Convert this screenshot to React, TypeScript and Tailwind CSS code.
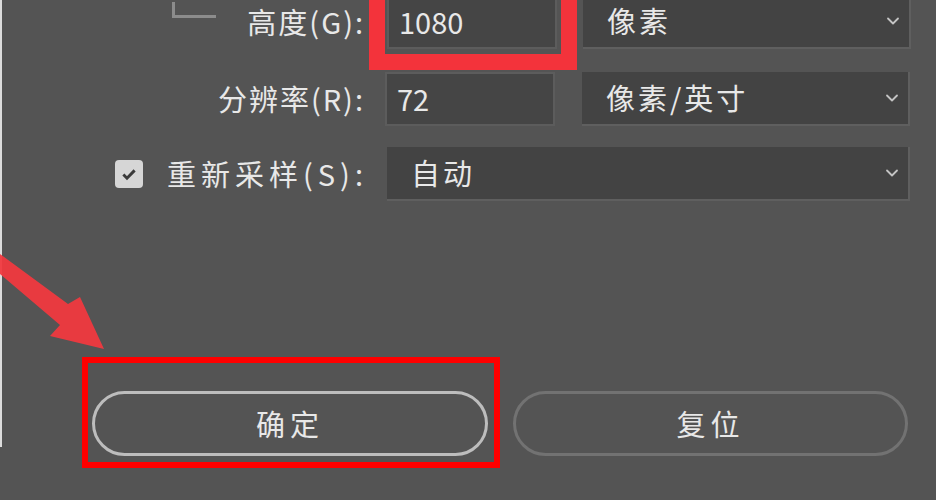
import { ChevronDown } from "lucide-react";

const font = { fontFamily: '"Microsoft YaHei", "Noto Sans CJK SC", sans-serif' };

function Select({ text, width, pad }: { text: string; width: string; pad: string }) {
  return (
    <div
      className={`flex h-full items-center justify-between border-b-2 border-r-2 border-[#5f5f5f] bg-[#434343] ${width} ${pad} pr-[6px]`}
    >
      <span className="tracking-[3px]">{text}</span>
      <ChevronDown className="h-[20px] w-[20px] text-[#c4c4c4]" strokeWidth={2.2} />
    </div>
  );
}

function NumberBox({ value }: { value: string }) {
  return (
    <div className="flex h-full w-[170px] items-center border-2 border-[#5c5c5c] bg-[#454545] pl-[10px]">
      {value}
    </div>
  );
}

export default function App() {
  return (
    <div
      className="relative h-[500px] w-[936px] overflow-hidden bg-[#545454] text-[29px] text-[#e8e8e8]"
      style={font}
    >
      {/* left window edge */}
      <div className="absolute left-0 top-0 h-[447px] w-[2px] bg-[#dcdcdc]" />

      {/* height row, scrolled partly off the top */}
      <div className="-mt-[5px] flex h-[54px] items-center">
        <div className="relative w-[370px] pr-[5px] text-right">
          {/* constrain-proportions bracket */}
          <div className="absolute left-[172px] top-[2px] h-[16px] w-[44px] border-b-[3px] border-l-[3px] border-[#8c8c8c]" />
          <span className="tracking-[2px]">高度(G):</span>
        </div>
        <div className="relative ml-[17px] h-full">
          <NumberBox value="1080" />
          {/* red highlight box */}
          <div className="pointer-events-none absolute -left-[18px] -right-[20px] -top-[10px] -bottom-[21px] border-[16px] border-t-0 border-[#f3333b]" />
        </div>
        <div className="ml-[26px] h-full">
          <Select text="像素" width="w-[328px]" pad="pl-[24px]" />
        </div>
      </div>

      {/* resolution row */}
      <div className="mt-[23px] flex h-[54px] items-center">
        <div className="w-[370px] pr-[5px] text-right tracking-[2px]">分辨率(R):</div>
        <div className="ml-[15px] h-full">
          <NumberBox value="72" />
        </div>
        <div className="ml-[27px] h-full">
          <Select text="像素/英寸" width="w-[328px]" pad="pl-[24px]" />
        </div>
      </div>

      {/* resample row */}
      <div className="mt-[21px] flex h-[54px] items-center">
        <div className="ml-[115px] flex h-[28px] w-[28px] items-center justify-center rounded-[4px] bg-[#d6d6d6]">
          <svg viewBox="0 0 16 16" className="h-[18px] w-[18px]">
            <path d="M3 8.5l3.2 3.2L13 4.8" fill="none" stroke="#3a3a3a" strokeWidth="2.6" />
          </svg>
        </div>
        <div className="ml-[24px] w-[210px] tracking-[5px]">重新采样(S):</div>
        <div className="ml-[10px] h-full">
          <Select text="自动" width="w-[523px]" pad="pl-[24px]" />
        </div>
      </div>

      {/* buttons */}
      <div className="mt-[190px] flex items-center pl-[92px]">
        <div className="relative">
          <button className="flex h-[65px] w-[396px] items-center justify-center rounded-full border-[3px] border-[#bdbdbd] tracking-[5px]">
            确定
          </button>
          <div className="pointer-events-none absolute -bottom-[12px] -left-[10px] -right-[12px] -top-[34px] border-[6px] border-[#ff0000]" />
        </div>
        <button className="ml-[25px] flex h-[65px] w-[395px] items-center justify-center rounded-full border-[3px] border-[#727272] tracking-[5px]">
          复位
        </button>
      </div>

      {/* annotation arrow */}
      <svg className="absolute left-0 top-[240px] h-[120px] w-[120px]" viewBox="0 0 120 120">
        <polygon
          points="0,14 68,64 80,57 104,109 50,96 60,85 0,34"
          fill="#f0393f"
          opacity="0.95"
        />
      </svg>
    </div>
  );
}
